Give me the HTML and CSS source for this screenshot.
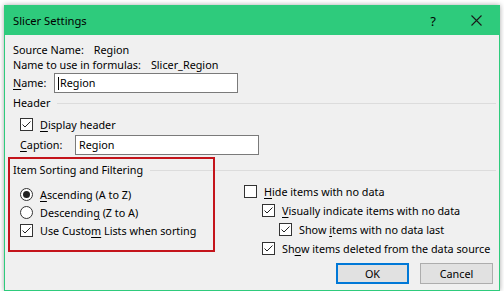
FILE: index.html
```html
<!DOCTYPE html>
<html lang="en">
<head>
    <meta charset="UTF-8">
    <title>Slicer Settings</title>
    <link rel="stylesheet" href="styles.css">
</head>
<body>
    <div class="dialog">
        <div class="titlebar">
            <span class="title">Slicer Settings</span>
            <span class="help">?</span>
            <svg class="close" width="11" height="11" viewBox="0 0 11 11">
                <path d="M0.5 0.5 L10.5 10.5 M10.5 0.5 L0.5 10.5" stroke="#1a1a1a" stroke-width="1.1" fill="none"/>
            </svg>
        </div>

        <div class="content">
            <div class="line">Source Name:<span class="value source">Region</span></div>
            <div class="line">Name to use in formulas:<span class="value formula">Slicer_Region</span></div>

            <div class="field-row name-row">
                <label class="field-label name-label"><u>N</u>ame:</label>
                <div class="textbox"><span class="caret"></span>Region</div>
            </div>

            <div class="group-head head-header"><span>Header</span><i></i></div>

            <div class="check-row display-row">
                <span class="box checked"><svg width="11" height="11" viewBox="0 0 11 11"><path d="M1.5 5.5 L4 8 L9.5 2.5" stroke="#222" stroke-width="1" fill="none"/></svg></span>
                <span><u>D</u>isplay header</span>
            </div>

            <div class="field-row caption-row">
                <label class="field-label caption-label"><u>C</u>aption:</label>
                <div class="textbox caption-box">Region</div>
            </div>

            <div class="lower">
                <div class="annotation"></div>
                <div class="group-head head-sort"><span>Item Sorting and Filtering</span><i></i></div>
                <div class="columns">
                    <div class="col-left">
                        <div class="opt-row">
                            <span class="radio on"></span>
                            <span><u>A</u>scending (A to Z)</span>
                        </div>
                        <div class="opt-row">
                            <span class="radio"></span>
                            <span>Descendin<u>g</u> (Z to A)</span>
                        </div>
                        <div class="opt-row">
                            <span class="box checked"><svg width="11" height="11" viewBox="0 0 11 11"><path d="M1.5 5.5 L4 8 L9.5 2.5" stroke="#222" stroke-width="1" fill="none"/></svg></span>
                            <span>Use Custo<u>m</u> Lists when sorting</span>
                        </div>
                    </div>
                    <div class="col-right">
                        <div class="opt-row tall">
                            <span class="box"></span>
                            <span><u>H</u>ide items with no data</span>
                        </div>
                        <div class="opt-row tall indent-1">
                            <span class="box checked"><svg width="11" height="11" viewBox="0 0 11 11"><path d="M1.5 5.5 L4 8 L9.5 2.5" stroke="#222" stroke-width="1" fill="none"/></svg></span>
                            <span><u>V</u>isually indicate items with no data</span>
                        </div>
                        <div class="opt-row tall indent-2">
                            <span class="box checked"><svg width="11" height="11" viewBox="0 0 11 11"><path d="M1.5 5.5 L4 8 L9.5 2.5" stroke="#222" stroke-width="1" fill="none"/></svg></span>
                            <span>Show <u>i</u>tems with no data last</span>
                        </div>
                        <div class="opt-row tall indent-1">
                            <span class="box checked"><svg width="11" height="11" viewBox="0 0 11 11"><path d="M1.5 5.5 L4 8 L9.5 2.5" stroke="#222" stroke-width="1" fill="none"/></svg></span>
                            <span>Sh<u>o</u>w items deleted from the data source</span>
                        </div>
                    </div>
                </div>
            </div>

            <div class="buttons">
                <button class="btn default">OK</button>
                <button class="btn">Cancel</button>
            </div>
        </div>
    </div>
</body>
</html>
```

FILE: styles.css
```css
* {
    box-sizing: border-box;
    margin: 0;
    padding: 0;
}

body {
    background-color: #ffffff;
    font-family: 'Noto Sans', 'Open Sans', sans-serif;
    font-size: 10.8px;
    color: #000;
    white-space: nowrap;
}

u {
    text-decoration-thickness: 1px;
    text-underline-offset: 2px;
}

.dialog {
    width: 496px;
    margin: 5px 0 0 4px;
    border: 1px solid #2ecb7c;
    background: #f0f0f0;
    box-shadow: 0 0 5px rgba(0, 0, 0, 0.35);
}

.titlebar {
    height: 29px;
    background: #2ecb7c;
    display: flex;
    align-items: center;
    padding: 0 17px 0 8px;
    font-size: 11.2px;
}

.titlebar .title {
    flex: 1;
}

.titlebar .help {
    font-size: 13px;
    margin-right: 35px;
}

.content {
    padding: 7px 3px 6px 8px;
}

.line {
    line-height: 15px;
    height: 15px;
}

.value.source {
    margin-left: 10px;
}

.value.formula {
    margin-left: 10px;
}

.field-row {
    display: flex;
    align-items: center;
}

.name-row {
    margin-top: 1px;
}

.field-label {
    line-height: 16px;
}

.name-label {
    width: 41px;
}

.caption-row {
    margin-top: 3px;
    padding-left: 7px;
}

.caption-label {
    width: 55px;
}

.textbox {
    width: 184px;
    height: 20px;
    background: #fff;
    border: 1px solid #7a7a7a;
    padding-left: 3px;
    line-height: 18px;
    display: flex;
    align-items: center;
}

.caret {
    width: 1px;
    height: 13px;
    background: #000;
    margin-right: 1px;
}

.group-head {
    display: flex;
    align-items: center;
    height: 16px;
    line-height: 16px;
}

.group-head i {
    flex: 1;
    height: 1px;
    background: #dcdcdc;
    margin-left: 7px;
}

.head-header {
    margin-top: 2px;
}

.check-row {
    display: flex;
    align-items: center;
    height: 16px;
    margin-top: 5px;
    padding-left: 7px;
}

.box {
    width: 13px;
    height: 13px;
    border: 1px solid #333;
    background: #fff;
    display: inline-flex;
    align-items: center;
    justify-content: center;
    margin-right: 7px;
    flex-shrink: 0;
}

.lower {
    position: relative;
    margin-top: 7px;
}

.annotation {
    position: absolute;
    left: -5px;
    top: -5px;
    width: 207px;
    height: 95px;
    border: 2px solid #c4141b;
    pointer-events: none;
}

.columns {
    display: grid;
    grid-template-columns: 231px 1fr;
}

.col-left {
    padding-left: 7px;
    padding-top: 7px;
}

.col-right {
    padding-top: 4px;
}

.opt-row {
    display: flex;
    align-items: center;
    height: 18px;
}

.opt-row.tall {
    height: 19px;
}

.indent-1 {
    padding-left: 18px;
}

.indent-2 {
    padding-left: 35px;
}

.radio {
    width: 13px;
    height: 13px;
    border: 1px solid #333;
    border-radius: 50%;
    background: #fff;
    margin-right: 7px;
    display: inline-flex;
    align-items: center;
    justify-content: center;
    flex-shrink: 0;
}

.radio.on::after {
    content: "";
    width: 7px;
    height: 7px;
    border-radius: 50%;
    background: #222;
}

.buttons {
    display: flex;
    justify-content: flex-end;
    gap: 11px;
    margin-top: 5px;
    padding-right: 3px;
}

.btn {
    width: 73px;
    height: 21px;
    font-family: inherit;
    font-size: 10.8px;
    background: #e1e1e1;
    border: 1px solid #adadad;
    color: #000;
}

.btn.default {
    border: 2px solid #0078d7;
}
```
